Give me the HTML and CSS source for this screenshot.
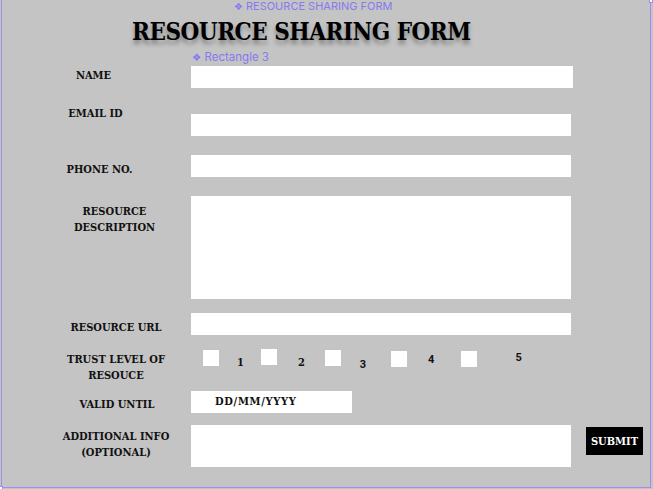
FILE: index.html
```html
<!DOCTYPE html>
<html>
<head>
<meta charset="utf-8">
<link rel="stylesheet" href="styles.css">
</head>
<body>
<div class="frame">
  <span class="handle handle-tr"></span>
  <span class="handle handle-bl"></span>
  <div class="frame-tag"><span class="comp">❖</span> RESOURCE SHARING FORM</div>
  <h1 class="title">RESOURCE SHARING FORM</h1>
  <div class="layer-tag"><span class="comp">❖</span> Rectangle 3</div>
  <form class="form">
    <div class="row row-name">
      <label class="label label-name">NAME</label>
      <div class="field field-wide"></div>
    </div>
    <div class="row row-email">
      <label class="label label-email">EMAIL ID</label>
      <div class="field field-email"></div>
    </div>
    <div class="row row-phone">
      <label class="label label-phone">PHONE NO.</label>
      <div class="field"></div>
    </div>
    <div class="row row-desc">
      <label class="label label-desc">RESOURCE<br>DESCRIPTION</label>
      <div class="field field-desc"></div>
    </div>
    <div class="row row-url">
      <label class="label label-url">RESOURCE URL</label>
      <div class="field"></div>
    </div>
    <div class="row row-trust">
      <label class="label label-trust">TRUST LEVEL OF<br>RESOUCE</label>
      <div class="options">
        <span class="opt opt-1"><span class="box"></span><span class="num num-slab">1</span></span>
        <span class="opt opt-2"><span class="box"></span><span class="num num-slab">2</span></span>
        <span class="opt opt-3"><span class="box"></span><span class="num num-sans">3</span></span>
        <span class="opt opt-4"><span class="box"></span><span class="num num-sans">4</span></span>
        <span class="opt opt-5"><span class="box"></span><span class="num num-sans">5</span></span>
      </div>
    </div>
    <div class="row row-date">
      <label class="label label-date">VALID UNTIL</label>
      <div class="field field-date">DD/MM/YYYY</div>
    </div>
    <div class="row row-info">
      <label class="label label-info">ADDITIONAL INFO<br>(OPTIONAL)</label>
      <div class="field field-info"></div>
      <button type="button" class="submit">SUBMIT</button>
    </div>
  </form>
</div>
</body>
</html>
```
FILE: styles.css
```css
html, body {
  margin: 0;
  padding: 0;
  background: #c4c4c4;
}
body {
  width: 653px;
  height: 489px;
  overflow: hidden;
  padding-left: 1px;
  box-sizing: border-box;
}
.frame {
  position: relative;
  width: 650px;
  height: 488px;
  box-sizing: border-box;
  border-left: 1px solid #9b90ee;
  border-right: 1px solid #9b90ee;
  border-bottom: 1px solid #9b90ee;
  background: #c4c4c4;
}
.handle {
  position: absolute;
  width: 4px;
  height: 4px;
  background: #fff;
  border: 1px solid #9b90ee;
  box-sizing: border-box;
}
.handle-tr { right: -3px; top: -1px; }
.handle-bl { left: -3px; bottom: -3px; }

.frame-tag, .layer-tag {
  font-family: Inter, "Noto Sans", sans-serif;
  color: #857af0;
  white-space: nowrap;
}
.comp {
  font-family: "DejaVu Sans", sans-serif;
  font-size: 0.9em;
}
.frame-tag {
  font-size: 11px;
  line-height: 12px;
  margin-left: 232px;
}
.title {
  margin: 5px 0 0 130px;
  font-family: "DejaVu Serif", serif;
  font-stretch: condensed;
  font-weight: bold;
  font-size: 24px;
  line-height: 28px;
  letter-spacing: -0.5px;
  color: #000;
  text-shadow: 0 4px 4px rgba(0, 0, 0, 0.35);
  white-space: nowrap;
}
.layer-tag {
  font-size: 11.5px;
  line-height: 13px;
  margin: 5px 0 0 190px;
}
.form {
  display: flex;
  flex-direction: column;
  margin: 0;
  padding-left: 39px;
}
.row {
  display: grid;
  grid-template-columns: 150px auto auto;
  justify-content: start;
  align-items: start;
}
.label {
  font-family: "DejaVu Serif", serif;
  font-stretch: condensed;
  font-weight: bold;
  font-size: 11px;
  line-height: 16px;
  color: #111;
  text-align: center;
}
.field {
  width: 380px;
  height: 22px;
  background: #fff;
}
.field-wide { width: 382px; }

.row-name { margin-top: 2px; }
.label-name { padding-right: 45px; padding-top: 2px; }
.row-email { margin-top: 19px; }
.label-email { padding-right: 41px; padding-top: 0; margin-top: -1px; }
.field-email { margin-top: 7px; }
.row-phone { margin-top: 19px; }
.label-phone { padding-right: 33px; padding-top: 7px; }
.row-desc { margin-top: 18px; }
.label-desc { padding-right: 3px; padding-top: 8px; }
.field-desc { height: 103px; }
.row-url { margin-top: 14px; }
.label-url { padding-top: 7px; }
.row-trust { margin-top: 14px; height: 34px; }
.label-trust { padding-top: 2px; }
.options {
  display: flex;
  align-items: flex-start;
  padding-left: 12px;
  padding-top: 0;
}
.opt {
  display: flex;
  align-items: flex-start;
}
.box {
  width: 16px;
  height: 16px;
  background: #fff;
}
.num {
  font-size: 11px;
  line-height: 12px;
  font-weight: bold;
  color: #111;
}
.num-slab { font-family: "DejaVu Serif", serif; font-stretch: condensed; }
.num-sans { font-family: Roboto, "Liberation Sans", sans-serif; }
.opt-1 .num { margin: 7px 0 0 18px; }
.opt-2 { margin-left: 17px; margin-top: -1px; }
.opt-2 .num { margin: 8px 0 0 21px; }
.opt-3 { margin-left: 20px; }
.opt-3 .num { margin: 9px 0 0 19px; }
.opt-4 { margin-left: 25px; margin-top: 1px; }
.opt-4 .num { margin: 3px 0 0 21px; }
.opt-5 { margin-left: 27px; margin-top: 1px; }
.opt-5 .num { margin: 1px 0 0 38px; }

.row-date { margin-top: 7px; }
.label-date { padding-top: 6px; padding-left: 2px; }
.field-date {
  width: 161px;
  box-sizing: border-box;
  padding-left: 24px;
  padding-top: 3px;
  font-family: "DejaVu Serif", serif;
  font-stretch: condensed;
  font-weight: bold;
  font-size: 11px;
  line-height: 16px;
  letter-spacing: 0.7px;
  color: #111;
}
.row-info { margin-top: 12px; }
.label-info { padding-top: 4px; }
.field-info { height: 42px; }
.submit {
  margin: 2px 0 0 15px;
  width: 57px;
  height: 28px;
  padding: 0;
  border: 0;
  background: #000;
  color: #fff;
  font-family: "DejaVu Serif", serif;
  font-stretch: condensed;
  font-weight: bold;
  font-size: 11px;
}
```
